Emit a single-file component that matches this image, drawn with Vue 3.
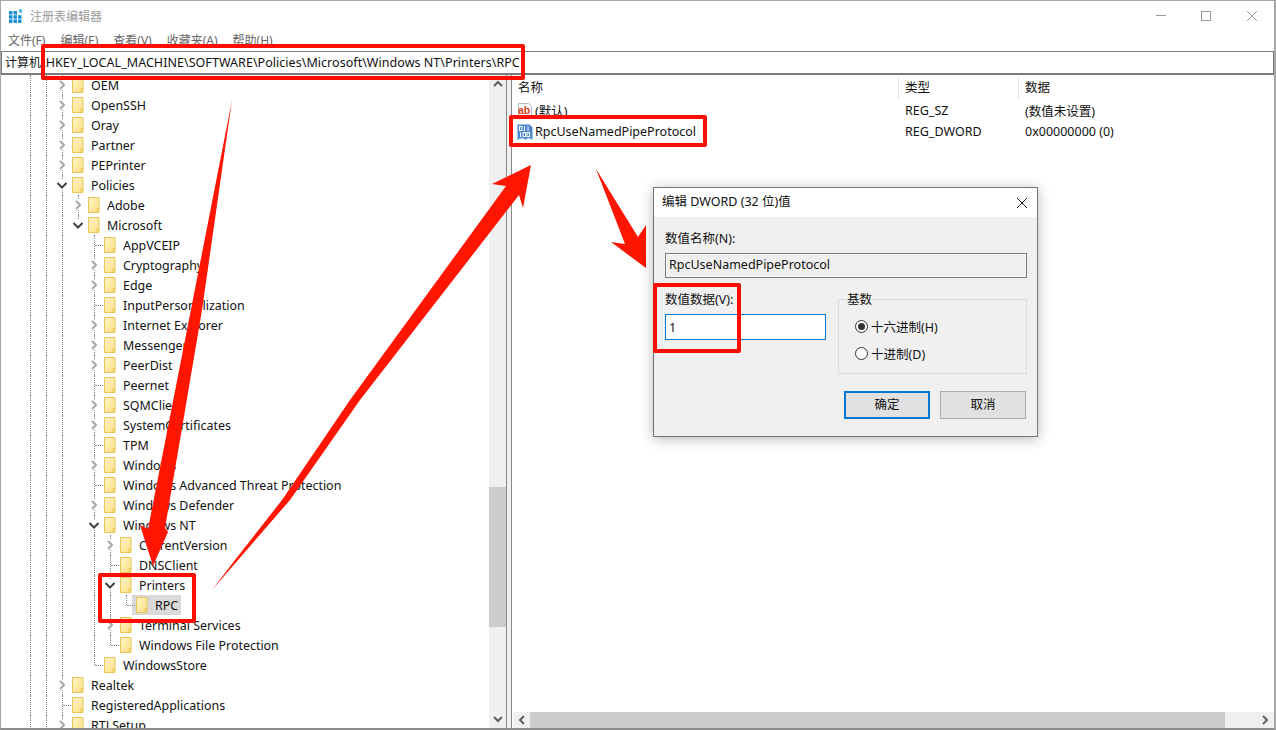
<script setup>
const chev = 'c', open = 'o', leaf = 'l', end = 'e', openEnd = 'oe'
const raw = [
  ['OEM', 2, chev], ['OpenSSH', 2, chev], ['Oray', 2, chev], ['Partner', 2, chev], ['PEPrinter', 2, chev],
  ['Policies', 2, open],
  ['Adobe', 3, chev], ['Microsoft', 3, openEnd],
  ['AppVCEIP', 4, leaf], ['Cryptography', 4, chev], ['Edge', 4, chev], ['InputPersonalization', 4, leaf],
  ['Internet Explorer', 4, chev], ['Messenger', 4, chev], ['PeerDist', 4, chev], ['Peernet', 4, leaf],
  ['SQMClient', 4, chev], ['SystemCertificates', 4, chev], ['TPM', 4, leaf], ['Windows', 4, chev],
  ['Windows Advanced Threat Protection', 4, leaf], ['Windows Defender', 4, chev], ['Windows NT', 4, open],
  ['CurrentVersion', 5, chev], ['DNSClient', 5, leaf], ['Printers', 5, open],
  ['RPC', 6, end], ['Terminal Services', 5, chev], ['Windows File Protection', 5, end],
  ['WindowsStore', 4, end],
  ['Realtek', 2, chev], ['RegisteredApplications', 2, leaf], ['RTLSetup', 2, chev]
]
const activeGuides = { 2: [0, 1], 3: [0, 1, 2], 4: [0, 1, 2], 5: [0, 1, 2, 4], 6: [0, 1, 2, 4, 5] }
const rows = raw.map(([text, level, kind]) => ({
  text, kind,
  guides: Array.from({ length: level }, (_, i) => activeGuides[level].includes(i)),
  selected: text === 'RPC'
}))
const menus = ['文件(F)', '编辑(E)', '查看(V)', '收藏夹(A)', '帮助(H)']
</script>

<template>
  <div class="win">
    <div class="titlebar">
      <svg class="appicon" width="14" height="15" viewBox="0 0 14 15">
        <g fill="#1a8fd6">
          <rect x="0" y="3" width="3.5" height="3.5" /><rect x="4.5" y="3" width="3.5" height="3.5" />
          <rect x="0" y="7.2" width="3.5" height="3.5" /><rect x="4.5" y="7.2" width="3.5" height="3.5" /><rect x="9" y="7.2" width="3.5" height="3.5" />
          <rect x="0" y="11.4" width="3.5" height="3.5" /><rect x="4.5" y="11.4" width="3.5" height="3.5" /><rect x="9" y="11.4" width="3.5" height="3.5" />
        </g>
        <path d="M11.5 0.5l2.5 2.5-2.5 2.5-2.5-2.5z" fill="#5cbcf0" />
      </svg>
      <span class="title">注册表编辑器</span>
      <div class="controls">
        <svg width="12" height="12" viewBox="0 0 12 12"><path d="M2 5.5h10" stroke="#999" /></svg>
        <svg width="12" height="12" viewBox="0 0 12 12"><rect x="1.5" y="1.5" width="9" height="9" fill="none" stroke="#999" /></svg>
        <svg width="12" height="12" viewBox="0 0 12 12"><path d="M1 1l10 10M11 1L1 11" stroke="#999" /></svg>
      </div>
    </div>
    <div class="menubar"><span v-for="m in menus" :key="m">{{ m }}</span></div>
    <div class="address"><span class="addr-root">计算机</span>\HKEY_LOCAL_MACHINE\SOFTWARE\Policies\Microsoft\Windows NT\Printers\RPC</div>

    <div class="main">
      <div class="treepane">
        <div class="tree">
          <div v-for="r in rows" :key="r.text" class="row">
            <span v-for="(g, i) in r.guides" :key="i" class="cell" :class="{ line: g }"></span>
            <span class="cell exp" :class="r.kind">
              <svg v-if="r.kind === 'c'" class="chev" width="16" height="20" viewBox="0 0 16 20"><path d="M5 6l4 4-4 4" fill="none" stroke="#a8a8a8" stroke-width="2" /></svg>
              <svg v-if="r.kind === 'o' || r.kind === 'oe'" class="chev" width="16" height="20" viewBox="0 0 16 20"><path d="M2.5 8l4.5 4.5L11.5 8" fill="none" stroke="#404040" stroke-width="2" /></svg>
            </span>
            <span class="item" :class="{ selected: r.selected }">
              <svg class="folder" width="12" height="16" viewBox="0 0 12 16">
                <defs>
                  <linearGradient id="fg" x1="0" y1="0" x2="1" y2="1"><stop offset="0" stop-color="#fff3c4" /><stop offset="1" stop-color="#ffe08a" /></linearGradient>
                </defs>
                <path d="M.5.5h10.5v15H.5z" fill="url(#fg)" stroke="#e9c558" />
                <path d="M9 15.5V11.5h2.5" fill="none" stroke="#e9c558" />
              </svg>
              <span>{{ r.text }}</span>
            </span>
          </div>
        </div>
        <div class="vscroll">
          <div class="sbtn">
            <svg width="10" height="7" viewBox="0 0 10 7"><path d="M1 6l4-4 4 4" fill="none" stroke="#606060" stroke-width="2" /></svg>
          </div>
          <div class="vtrack"><div class="vthumb"></div></div>
          <div class="sbtn">
            <svg width="10" height="7" viewBox="0 0 10 7"><path d="M1 1l4 4 4-4" fill="none" stroke="#606060" stroke-width="2" /></svg>
          </div>
        </div>
      </div>
      <div class="splitter"></div>
      <div class="listpane">
        <div class="listbody">
          <div class="lhead">
            <span class="c1">名称</span><span class="c2">类型</span><span class="c3">数据</span>
          </div>
          <div class="lrow">
            <span class="c1">
              <svg class="licon" width="16" height="16" viewBox="0 0 16 16">
                <path d="M1.5.5h10l3 3v12h-13z" fill="#fff" stroke="#b8b8b8" />
                <text x="1" y="11" class="abtext">ab</text>
              </svg>
              (默认)
            </span>
            <span class="c2">REG_SZ</span><span class="c3">(数值未设置)</span>
          </div>
          <div class="lrow">
            <span class="c1">
              <svg class="licon" width="16" height="16" viewBox="0 0 16 16">
                <path d="M.5.5h12l3 3v12l-4-1.5-3 1.5-3-1.5-5 1.5z" fill="#4a85cf" stroke="#9cc3ea" />
                <g fill="none" stroke="#fff">
                  <rect x="2.5" y="2.5" width="2.5" height="4" /><path d="M7.5 2v5M11 2v5" />
                  <path d="M3.5 8.5v4.5" /><rect x="6" y="8.5" width="2.5" height="4" /><rect x="10" y="8.5" width="2.5" height="4" />
                </g>
              </svg>
              RpcUseNamedPipeProtocol
            </span>
            <span class="c2">REG_DWORD</span><span class="c3">0x00000000 (0)</span>
          </div>
        </div>
        <div class="hscroll">
          <div class="hbtn"><svg width="7" height="10" viewBox="0 0 7 10"><path d="M6 1L2 5l4 4" fill="none" stroke="#606060" stroke-width="2" /></svg></div>
          <div class="hthumb"></div>
          <div class="htrack"></div>
          <div class="hbtn"><svg width="7" height="10" viewBox="0 0 7 10"><path d="M1 1l4 4-4 4" fill="none" stroke="#606060" stroke-width="2" /></svg></div>
        </div>
      </div>
    </div>

    <svg class="arrows" width="1276" height="730" viewBox="0 0 1276 730">
      <polygon fill="#ff1500" points="232,100 202,310 180,440 165,528 168,532 153,566 140,525 148,529" />
      <polygon fill="#ff1500" points="212,590 235,560 282,500 350,400 506,186 492,184 531,165 523,208 519,195 360,400 290,500 238,560" />
      <polygon fill="#ff1500" points="596,169 638,237 646,225 646,268 611,242 625,244" />
    </svg>

    <div class="dialog">
      <div class="dtitle">
        <span class="dtitle-text">编辑 DWORD (32 位)值</span>
        <svg width="12" height="12" viewBox="0 0 12 12"><path d="M1 1l10 10M11 1L1 11" stroke="#222" /></svg>
      </div>
      <div class="dbody">
        <div class="dlabel">数值名称(N):</div>
        <div class="nameinput">RpcUseNamedPipeProtocol</div>
        <div class="drow">
          <div class="dleft">
            <div class="dlabel shifted">数值数据(V):</div>
            <div class="valinput">1</div>
          </div>
          <fieldset class="group">
            <legend><span class="legend-text">基数</span></legend>
            <div class="radio"><span class="rdot on"></span>十六进制(H)</div>
            <div class="radio"><span class="rdot"></span>十进制(D)</div>
          </fieldset>
        </div>
        <div class="btns">
          <div class="btn primary">确定</div>
          <div class="btn">取消</div>
        </div>
      </div>
    </div>

    <div class="redbox rb-addr"></div>
    <div class="redbox rb-list"></div>
    <div class="redbox rb-val"></div>
    <div class="redbox rb-tree"></div>
  </div>
</template>

<style scoped>
.win {
  position: relative;
  width: 1276px;
  height: 730px;
  box-sizing: border-box;
  border-top: 1px solid #a6a6a6;
  border-left: 1px solid #a6a6a6;
  border-right: 2px solid #a6a6a6;
  border-bottom: 2px solid #8c8c8c;
  background: #fff;
  display: flex;
  flex-direction: column;
  overflow: hidden;
  font-family: "Noto Sans", "Noto Sans CJK SC", sans-serif;
  font-size: 12.5px;
  color: #111;
}
.titlebar {
  height: 29px;
  flex: none;
  display: flex;
  align-items: center;
  padding-left: 8px;
}
.appicon { margin-right: 7px; }
.title { font-size: 12px; color: #999; }
.controls {
  margin-left: auto;
  display: flex;
  gap: 34px;
  padding-right: 16px;
}
.menubar {
  height: 21px;
  flex: none;
  box-sizing: border-box;
  padding-bottom: 2px;
  display: flex;
  align-items: center;
  gap: 15px;
  padding-left: 7px;
  font-size: 12px;
  color: #666;
}
.address {
  height: 24px;
  flex: none;
  box-sizing: border-box;
  border: 1px solid #7a7a7a;
  border-bottom-width: 2px;
  line-height: 21px;
  padding-left: 3px;
  white-space: nowrap;
  letter-spacing: 0.04px;
}
.addr-root { font-size: 12px; letter-spacing: 0; }
.main {
  flex: 1;
  min-height: 0;
  display: flex;
}
.treepane {
  width: 505px;
  flex: none;
  display: flex;
  overflow: hidden;
}
.tree {
  flex: 1;
  min-width: 0;
  overflow: hidden;
  padding-left: 22px;
  font-size: 12.44px;
}
.row {
  height: 20px;
  display: flex;
  align-items: center;
  white-space: nowrap;
}
.cell {
  position: relative;
  width: 16px;
  height: 20px;
  flex: none;
}
.cell.line::before,
.exp::before {
  content: "";
  position: absolute;
  left: 7px;
  top: 0;
  bottom: 0;
  border-left: 1px dotted #8a8a8a;
}
.exp.e::before,
.exp.oe::before { bottom: 10px; }
.exp.l::after,
.exp.e::after {
  content: "";
  position: absolute;
  left: 8px;
  top: 10px;
  width: 8px;
  border-top: 1px dotted #8a8a8a;
}
.chev {
  position: absolute;
  left: 0;
  top: 0;
}
.exp.c .chev, .exp.o .chev, .exp.oe .chev { background: linear-gradient(#0000 5px, #fff 5px, #fff 15px, #0000 15px); }
.item {
  display: flex;
  align-items: center;
  height: 20px;
  margin-left: -3px;
  padding: 0 3px 0 4px;
  gap: 7px;
}
.item.selected { background: #d9d9d9; }
.folder { flex: none; }
.vscroll {
  width: 17px;
  flex: none;
  background: #f0f0f0;
  display: flex;
  flex-direction: column;
}
.sbtn {
  height: 17px;
  flex: none;
  display: flex;
  align-items: center;
  justify-content: center;
}
.vtrack { flex: 1; padding-top: 395px; }
.vthumb { height: 140px; background: #cdcdcd; }
.splitter {
  width: 4px;
  flex: none;
  background: #f0f0f0;
  border-left: 1px solid #8a8a8a;
  border-right: 1px solid #8a8a8a;
}
.listpane {
  flex: 1;
  min-width: 0;
  display: flex;
  flex-direction: column;
}
.listbody { flex: 1; min-height: 0; }
.lhead {
  height: 22px;
  display: flex;
  margin-top: 2px;
  margin-bottom: 1px;
  line-height: 22px;
}
.lrow {
  height: 21px;
  display: flex;
  align-items: center;
}
.c1 { width: 386px; padding-left: 6px; box-sizing: border-box; display: flex; align-items: center; gap: 2px; }
.lrow .c1 { padding-left: 5px; }
.c2 { width: 120px; padding-left: 7px; box-sizing: border-box; }
.c3 { padding-left: 7px; }
.lhead .c2, .lhead .c3 { border-left: 1px solid #e5e5e5; padding-left: 6px; }
.licon { flex: none; }
.abtext {
  font-family: "Liberation Sans", sans-serif;
  font-size: 10.5px;
  font-weight: 700;
  fill: #d9401e;
}
.hscroll {
  height: 16px;
  margin-left: 1px;
  flex: none;
  display: flex;
  background: #f0f0f0;
}
.hbtn {
  width: 17px;
  flex: none;
  display: flex;
  align-items: center;
  justify-content: center;
}
.hthumb { width: 695px; background: #cdcdcd; flex: none; }
.htrack { flex: 1; }
.arrows {
  position: absolute;
  left: -1px;
  top: -1px;
  pointer-events: none;
}
.dialog {
  position: absolute;
  left: 652px;
  top: 186px;
  width: 385px;
  height: 250px;
  box-sizing: border-box;
  border: 1px solid #757575;
  background: #f0f0f0;
  box-shadow: 0 2px 12px rgba(0, 0, 0, 0.28);
}
.dtitle {
  height: 29px;
  background: #fff;
  display: flex;
  align-items: center;
  justify-content: space-between;
  padding: 0 9px 0 8px;
}
.dtitle-text { line-height: 27px; height: 29px; }
.dbody { padding: 13px 10px 0 11px; }
.dlabel { height: 18px; line-height: 18px; }
.dlabel.shifted { line-height: 20px; }
.nameinput {
  margin-top: 5px;
  height: 25px;
  box-sizing: border-box;
  border: 1px solid #7a7a7a;
  outline: 1px solid #f8f8f8;
  outline-offset: -2px;
  background: #efefef;
  line-height: 22px;
  padding-left: 3px;
}
.drow {
  display: flex;
  gap: 12px;
  margin-top: 12px;
}
.dleft { width: 161px; flex: none; }
.valinput {
  margin-top: 6px;
  height: 26px;
  box-sizing: border-box;
  border: 1px solid #0078d7;
  background: #fff;
  line-height: 25px;
  padding-left: 3px;
}
.group {
  flex: 1;
  margin: 0;
  padding: 5px 0 0 16px;
  height: 84px;
  box-sizing: border-box;
  border: 1px solid #dcdcdc;
  min-width: 0;
}
.group legend { padding: 0; margin-left: -8px; line-height: 18px; }
.legend-text { position: relative; top: 1px; }
.radio {
  height: 27px;
  display: flex;
  align-items: center;
  gap: 3px;
}
.rdot {
  width: 13px;
  height: 13px;
  box-sizing: border-box;
  border: 1px solid #333;
  border-radius: 50%;
  background: #fff;
  position: relative;
}
.rdot.on::after {
  content: "";
  position: absolute;
  left: 2px;
  top: 2px;
  width: 7px;
  height: 7px;
  border-radius: 50%;
  background: #333;
}
.btns {
  display: flex;
  gap: 10px;
  margin-top: 17px;
  margin-left: 179px;
}
.btn {
  width: 86px;
  height: 28px;
  box-sizing: border-box;
  border: 1px solid #adadad;
  background: #e1e1e1;
  text-align: center;
  line-height: 26px;
}
.btn.primary {
  border: 2px solid #0078d7;
  line-height: 24px;
}
.redbox {
  position: absolute;
  box-sizing: border-box;
  border: 4px solid #ff0d00;
  border-radius: 2px;
}
.rb-addr { left: 40px; top: 43px; width: 484px; height: 36px; }
.rb-list { left: 508px; top: 114px; width: 198px; height: 32px; }
.rb-val { left: 652px; top: 282px; width: 88px; height: 70px; }
.rb-tree { left: 97px; top: 572px; width: 98px; height: 50px; }
</style>

<style>
html, body { margin: 0; padding: 0; background: #fff; }
</style>
